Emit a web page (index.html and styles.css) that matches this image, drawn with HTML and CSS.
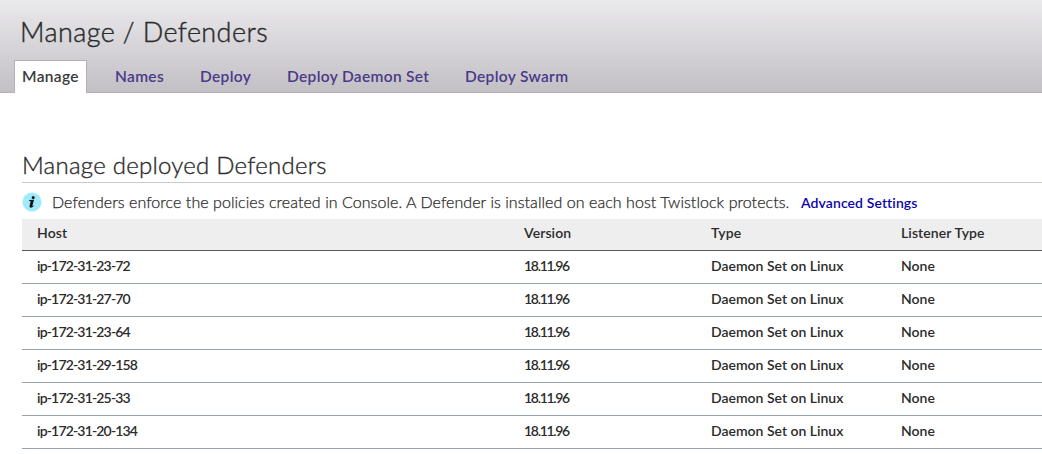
FILE: index.html
```html
<!DOCTYPE html>
<html lang="en">
<head>
<meta charset="utf-8">
<title>Manage / Defenders</title>
<link rel="stylesheet" href="styles.css">
</head>
<body>
<header class="top">
  <h1 class="page-title">Manage / Defenders</h1>
  <nav class="tabs">
    <a class="tab tab-active">Manage</a>
    <a class="tab names">Names</a>
    <a class="tab deploy">Deploy</a>
    <a class="tab daemon">Deploy Daemon Set</a>
    <a class="tab swarm">Deploy Swarm</a>
  </nav>
</header>
<main class="content">
  <h2 class="section-title">Manage deployed Defenders</h2>
  <div class="info">
    <svg class="info-icon" viewBox="0 0 20 20" width="20" height="20"><circle cx="10" cy="10" r="9.5" fill="#9eebfb"/><circle cx="11.2" cy="5.4" r="1.5" fill="#111"/><path d="M7.2 8.1 12 7.8 10.4 13.8Q10.3 14.5 12 13.2L12.3 13.6Q10.4 15.8 8.8 15.7 7.2 15.5 7.6 13.7L8.7 9.2 7.1 8.9Z" fill="#111"/></svg>
    <p class="info-text">Defenders enforce the policies created in Console. A Defender is installed on each host Twistlock protects.</p>
    <a class="info-link">Advanced Settings</a>
  </div>
  <div class="table">
    <div class="row head"><span>Host</span><span>Version</span><span>Type</span><span>Listener Type</span></div>
    <div class="row"><span class="host">ip-172-31-23-72</span><span class="version">18.11.96</span><span>Daemon Set on Linux</span><span>None</span></div>
    <div class="row"><span class="host">ip-172-31-27-70</span><span class="version">18.11.96</span><span>Daemon Set on Linux</span><span>None</span></div>
    <div class="row"><span class="host">ip-172-31-23-64</span><span class="version">18.11.96</span><span>Daemon Set on Linux</span><span>None</span></div>
    <div class="row"><span class="host">ip-172-31-29-158</span><span class="version">18.11.96</span><span>Daemon Set on Linux</span><span>None</span></div>
    <div class="row"><span class="host">ip-172-31-25-33</span><span class="version">18.11.96</span><span>Daemon Set on Linux</span><span>None</span></div>
    <div class="row"><span class="host">ip-172-31-20-134</span><span class="version">18.11.96</span><span>Daemon Set on Linux</span><span>None</span></div>
  </div>
</main>
</body>
</html>
```
FILE: styles.css
```css
* { box-sizing: border-box; }
body { margin: 0; background: #fff; color: #2b2b2b; font-family: Lato, "Open Sans", sans-serif; overflow: hidden; }
.top { display: flex; flex-direction: column; justify-content: space-between; height: 93px; background: linear-gradient(#eae9ec, #c3c0c5); border-bottom: 1px solid #b3b1b6; }
.page-title { margin: 12px 0 0 20px; font-size: 27px; font-weight: 300; letter-spacing: 0.4px; line-height: 40px; white-space: nowrap; -webkit-text-stroke: 0.4px #2b2b2b; }
.tabs { display: flex; height: 33px; margin: 0 0 -1px 14px; }
.tab { padding: 0 8px; font-size: 15.5px; font-weight: 600; letter-spacing: 0.33px; line-height: 32px; color: #493989; white-space: nowrap; }
.tab-active { width: 73px; padding: 0 7px; color: #3a3a3a; background: #fff; border: 1px solid #b3b1b6; border-bottom: 0; line-height: 30px; }
.names { width: 86px; padding-left: 28px; }
.deploy { width: 86px; padding-left: 27px; }
.daemon { width: 178px; padding-left: 28px; }
.swarm { padding-left: 28px; }
.content { padding: 55px 0 0 22px; }
.section-title { margin: 0; height: 35px; font-size: 24px; font-weight: 300; letter-spacing: 0.25px; line-height: 33px; border-bottom: 1px solid #c9c9d2; white-space: nowrap; -webkit-text-stroke: 0.35px #2b2b2b; }
.info { display: flex; align-items: center; height: 36px; padding-top: 3px; }
.info-icon { flex: none; margin-top: -2px; }
.info-text { width: 749px; margin: -2px 0 0 10px; font-size: 16px; font-weight: 300; letter-spacing: 0.055px; white-space: nowrap; -webkit-text-stroke: 0.25px #2b2b2b; }
.info-link { font-size: 14px; font-weight: 600; letter-spacing: 0.1px; color: #0b04ac; white-space: nowrap; }
.row { display: grid; grid-template-columns: 487px 187px 190px 1fr; height: 33px; padding-left: 15px; border-bottom: 1px solid #98a4ad; font-size: 14px; font-weight: 600; line-height: 30px; white-space: nowrap; }
.head { height: 32px; background: #eee; border-bottom-color: #5a5a5d; line-height: 28px; letter-spacing: 0.1px; }
.host { letter-spacing: -0.83px; }
.version { letter-spacing: -1.3px; }
```
